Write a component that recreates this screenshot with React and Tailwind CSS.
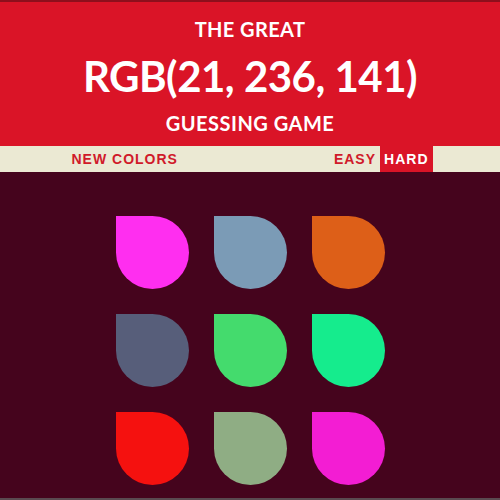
import React from "react";

const colors = [
  "#ff2ef0", "#7b9bb6", "#dd5f18",
  "#575e7a", "#44db6d", "#15ec8d",
  "#f5110f", "#8fad84", "#f31dd3",
];

export default function App() {
  return (
    <div className="w-[500px] h-[500px] bg-[#45041d] flex flex-col overflow-hidden">
      <header className="bg-[#da1427] border-t-2 border-[#8e0f1c] text-white text-center font-['Lato',sans-serif] font-bold pt-[15px] pb-[11px]">
        <div className="text-[20px] leading-[24px] tracking-[0.4px]">THE GREAT</div>
        <div className="text-[42px] leading-[50px] mt-[10px] tracking-[-0.5px]">RGB(21, 236, 141)</div>
        <div className="text-[20px] leading-[24px] mt-[10px] tracking-[0.5px]">GUESSING GAME</div>
      </header>
      <nav className="bg-[#ebe9d3] h-[26px] flex justify-center font-['Liberation_Sans',Arial,sans-serif] font-bold text-[14px] tracking-[1px]">
        <div className="w-[365px] flex justify-between">
          <button className="px-1 text-[#d01a2a] leading-[26px]">NEW COLORS</button>
          <div className="flex">
            <button className="px-1 text-[#d01a2a] leading-[26px]">EASY</button>
            <button className="px-1 bg-[#da1427] text-white leading-[26px]">HARD</button>
          </div>
        </div>
      </nav>
      <main className="flex-1 flex justify-center pt-[44px]">
        <div className="grid grid-cols-3 gap-[25px] w-[269px] h-fit">
          {colors.map((c, i) => (
            <div
              key={i}
              className="w-[73px] h-[73px] rounded-tr-full rounded-b-full"
              style={{ backgroundColor: c }}
            />
          ))}
        </div>
      </main>
      <div className="h-[2px] bg-[#5a4a50]" />
    </div>
  );
}
